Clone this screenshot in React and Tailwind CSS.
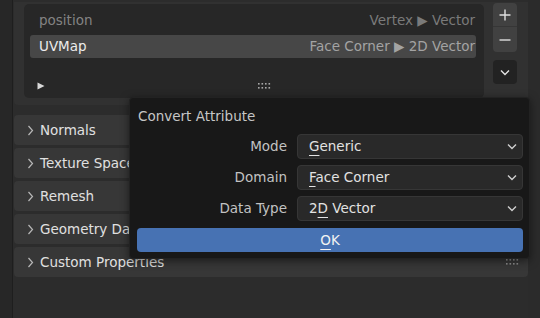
import React from "react";

const Chevron = () => (
  <svg width="7" height="11" viewBox="0 0 7 11" className="shrink-0">
    <path d="M1.5 1 L5.5 5.5 L1.5 10" fill="none" stroke="#b8b8b8" strokeWidth="1.2" />
  </svg>
);

const Grip = ({ color = "#9a9a9a" }) => (
  <svg width="13" height="7" viewBox="0 0 13 7">
    {[0, 1, 2, 3].map((i) =>
      [0, 1].map((j) => (
        <rect key={i + "-" + j} x={i * 3.5} y={j * 4} width="1.6" height="1.6" fill={color} />
      ))
    )}
  </svg>
);

const DownArrow = ({ color = "#cfcfcf" }) => (
  <svg width="10" height="7" viewBox="0 0 10 7">
    <path d="M1 1.5 L5 5.5 L9 1.5" fill="none" stroke={color} strokeWidth="1.4" />
  </svg>
);

// Blender-style menu key underline
const Key = ({ children }) => (
  <span className="underline decoration-1 underline-offset-[4px]">{children}</span>
);

const panels = ["Normals", "Texture Space", "Remesh", "Geometry Data", "Custom Properties"];

const Dropdown = ({ children }) => (
  <div className="h-[25px] flex items-center justify-between pl-[11px] pr-[5px] bg-[#292929] border border-[#363636] rounded-[4px] text-[#e2e2e2]">
    <span>{children}</span>
    <DownArrow />
  </div>
);

const App = () => {
  return (
    <div
      className="w-[540px] h-[318px] bg-[#2c2c2c] flex relative overflow-hidden text-[13.5px]"
      style={{ fontFamily: "'DejaVu Sans', sans-serif" }}
    >
      {/* left strip */}
      <div className="w-[13px] bg-[#272727] border-r border-[#1e1e1e]" />

      {/* main column */}
      <div className="w-[515px] flex flex-col pl-[1px]">
        {/* attributes panel body */}
        <div className="mt-[2px] h-[103px] bg-[#313131] rounded-b-[4px] flex items-start pl-[10px]">
          <div className="mt-[2px] w-[460px] h-[94px] bg-[#272727] rounded-[5px] flex flex-col pt-[5px] pl-[6px] pr-[8px]">
            <div className="h-[23px] flex items-center justify-between pl-[9px] pr-[1px]">
              <span className="text-[#838383]">position</span>
              <span className="text-[#7a7a7a]">Vertex ▶ Vector</span>
            </div>
            <div className="mt-[3px] h-[23px] flex items-center justify-between pl-[9px] pr-[1px] bg-[#474747] rounded-[3px]">
              <span className="text-[#ececec]">UVMap</span>
              <span className="text-[#a3a3a3]">Face Corner ▶ 2D Vector</span>
            </div>
            <div className="mt-[24px] flex items-center pl-[7px] pr-[205px] justify-between">
              <svg width="8" height="8" viewBox="0 0 8 8">
                <polygon points="0.5,0.5 7.5,4 0.5,7.5" fill="#d8d8d8" />
              </svg>
              <Grip color="#a8a8a8" />
            </div>
          </div>

          <div className="ml-[9px] mt-[1px] flex flex-col">
            <div className="w-[24px] bg-[#414141] rounded-[4px] flex flex-col">
              <div className="h-[24px] flex items-center justify-center border-b border-[#363636]">
                <svg width="12" height="12" viewBox="0 0 12 12">
                  <path d="M6 0.5 V11.5 M0.5 6 H11.5" stroke="#e0e0e0" strokeWidth="1.4" />
                </svg>
              </div>
              <div className="h-[25px] flex items-center justify-center">
                <svg width="12" height="12" viewBox="0 0 12 12">
                  <path d="M0.5 6 H11.5" stroke="#e0e0e0" strokeWidth="1.4" />
                </svg>
              </div>
            </div>
            <div className="mt-[8px] w-[24px] h-[24px] bg-[#222222] rounded-[4px] flex items-center justify-center">
              <DownArrow color="#e4e4e4" />
            </div>
          </div>
        </div>

        {/* collapsed panels */}
        <div className="mt-[10px] flex flex-col gap-[3px]">
          {panels.map((p) => (
            <div
              key={p}
              className="h-[30px] bg-[#373737] rounded-[4px] flex items-center pl-[13px] pr-[9px] text-[#e0e0e0]"
            >
              <Chevron />
              <span className="ml-[6px] flex-1">{p}</span>
              <Grip color="#8f8f8f" />
            </div>
          ))}
        </div>
      </div>

      {/* right strip */}
      <div className="w-[12px] bg-[#2b2b2b]" />

      {/* Convert Attribute popup */}
      <div className="absolute left-[129px] top-[97px] w-[401px] h-[162px] bg-[#181818] border border-[#222222] rounded-[4px] shadow-[0_2px_8px_rgba(0,0,0,0.5)] flex flex-col pl-[7px] pr-[6px]">
        <div className="h-[36px] flex items-center pl-[1px] text-[#c6c6c6]">Convert Attribute</div>
        <div className="flex flex-col gap-[6px]">
          <div className="flex items-center">
            <span className="w-[150px] text-right text-[#c2c2c2]">Mode</span>
            <div className="ml-[10px] flex-1">
              <Dropdown>
                <Key>G</Key>eneric
              </Dropdown>
            </div>
          </div>
          <div className="flex items-center">
            <span className="w-[150px] text-right text-[#c2c2c2]">Domain</span>
            <div className="ml-[10px] flex-1">
              <Dropdown>
                <Key>F</Key>ace Corner
              </Dropdown>
            </div>
          </div>
          <div className="flex items-center">
            <span className="w-[150px] text-right text-[#c2c2c2]">Data Type</span>
            <div className="ml-[10px] flex-1">
              <Dropdown>
                2<Key>D</Key> Vector
              </Dropdown>
            </div>
          </div>
        </div>
        <div className="mt-[7px] h-[24px] bg-[#4772b3] rounded-[4px] flex items-center justify-center text-[#f2f2f2]">
          <span>
            <Key>O</Key>K
          </span>
        </div>
      </div>
    </div>
  );
};

export default App;
